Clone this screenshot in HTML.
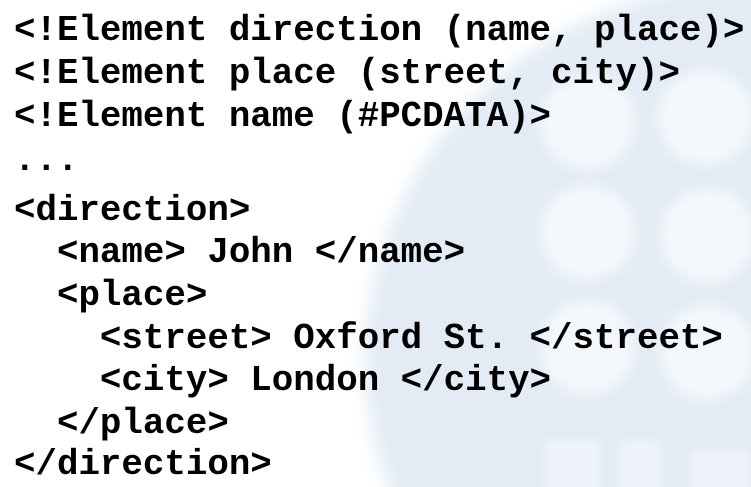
<!DOCTYPE html>
<html><head><style>
html,body{margin:0;padding:0;background:#fff}
#w{position:relative;width:751px;height:487px;overflow:hidden;background:#fff}
.blob{position:absolute;left:365px;top:-20px;width:800px;height:760px;border-radius:50%;background:#e3ecf5;filter:blur(8px)}
.c{position:absolute;width:95px;height:95px;border-radius:50%;background:#f4f7fb;filter:blur(6px)}
.r{position:absolute;background:#eef3f9;filter:blur(4px)}
.l{position:absolute;left:14px;font-family:"Liberation Mono",monospace;font-weight:bold;font-size:35.8px;line-height:40px;white-space:pre;color:#000}
</style></head><body><div id="w">
<div class="blob"></div>
<div class="c" style="left:540px;top:75px"></div>
<div class="c" style="left:658px;top:70px"></div>
<div class="c" style="left:540px;top:185px"></div>
<div class="c" style="left:660px;top:188px"></div>
<div class="c" style="left:540px;top:300px"></div>
<div class="c" style="left:660px;top:305px"></div>
<div class="r" style="left:545px;top:440px;width:55px;height:60px"></div>
<div class="r" style="left:620px;top:440px;width:40px;height:60px"></div>
<div class="r" style="left:690px;top:450px;width:60px;height:50px"></div>
<div class="l" style="top:11px">&lt;!Element direction (name, place)&gt;</div>
<div class="l" style="top:54px">&lt;!Element place (street, city)&gt;</div>
<div class="l" style="top:97px">&lt;!Element name (#PCDATA)&gt;</div>
<div class="l" style="top:141px">...</div>
<div class="l" style="top:191px">&lt;direction&gt;</div>
<div class="l" style="top:233px">  &lt;name&gt; John &lt;/name&gt;</div>
<div class="l" style="top:276px">  &lt;place&gt;</div>
<div class="l" style="top:319px">    &lt;street&gt; Oxford St. &lt;/street&gt;</div>
<div class="l" style="top:361px">    &lt;city&gt; London &lt;/city&gt;</div>
<div class="l" style="top:404px">  &lt;/place&gt;</div>
<div class="l" style="top:445px">&lt;/direction&gt;</div>
</div></body></html>
